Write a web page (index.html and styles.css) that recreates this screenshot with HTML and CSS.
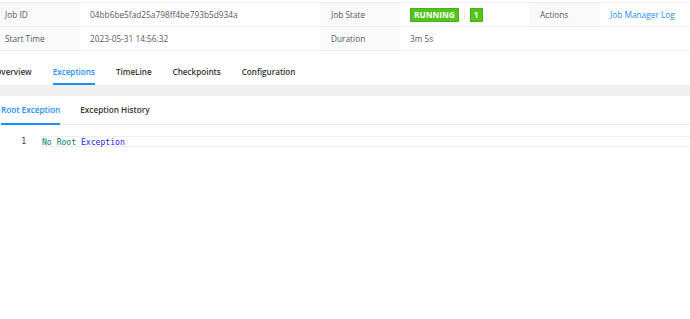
FILE: index.html
```html
<!DOCTYPE html>
<html lang="en">
<head>
    <meta charset="UTF-8">
    <meta name="viewport" content="width=device-width, initial-scale=1.0">
    <title>Job Exceptions</title>
    <link rel="stylesheet" href="styles.css">
</head>
<body>
    <div class="page">
        <table class="summary">
            <colgroup>
                <col class="c-label-1">
                <col class="c-value-1">
                <col class="c-label-2">
                <col class="c-value-2">
                <col class="c-label-3">
                <col class="c-value-3">
            </colgroup>
            <tr>
                <td class="label first">Job ID</td>
                <td>04bb6be5fad25a798ff4be793b5d934a</td>
                <td class="label">Job State</td>
                <td>
                    <span class="badge">RUNNING</span><span class="sep"></span><span class="badge">1</span>
                </td>
                <td class="label">Actions</td>
                <td><a class="link" href="#">Job Manager Log</a></td>
            </tr>
            <tr>
                <td class="label first">Start Time</td>
                <td>2023-05-31 14:56:32</td>
                <td class="label">Duration</td>
                <td colspan="3">3m 5s</td>
            </tr>
        </table>

        <nav class="tabs">
            <span class="tab">Overview</span>
            <span class="tab active">Exceptions</span>
            <span class="tab">TimeLine</span>
            <span class="tab">Checkpoints</span>
            <span class="tab">Configuration</span>
        </nav>

        <div class="band"></div>

        <div class="card">
            <div class="subtabs">
                <span class="subtab active">Root Exception</span>
                <span class="subtab">Exception History</span>
            </div>
            <div class="editor">
                <div class="code-line">
                    <span class="line-no">1</span>
                    <span class="line-text"><span class="kw">No</span> <span class="kw">Root</span> <span class="type">Exception</span></span>
                </div>
            </div>
        </div>
    </div>
</body>
</html>
```

FILE: styles.css
```css
body {
    margin: 0;
    background: #fff;
    font-family: "Open Sans", "Noto Sans", sans-serif;
    font-size: 8.3px;
    color: #595959;
    overflow: hidden;
}
.page {
    margin-left: -5px;
    width: 760px;
}
.summary {
    margin-top: 2px;
    width: 100%;
    border-collapse: collapse;
    table-layout: fixed;
    border-top: 1px solid #ececec;
    border-bottom: 1px solid #ececec;
}
.c-label-1 { width: 85px; }
.c-value-1 { width: 240px; }
.c-label-2 { width: 80px; }
.c-value-2 { width: 129px; }
.c-label-3 { width: 71px; }
.summary td {
    height: 23px;
    padding: 0 10px;
    border-bottom: 1px solid #ececec;
    white-space: nowrap;
    vertical-align: middle;
}
.summary td.label {
    background: #fafafa;
    padding-left: 11px;
}
.summary td.first {
    padding-left: 10px;
}
.badge {
    display: inline-block;
    background: #52c41a;
    border: 1px solid #49b017;
    color: #fff;
    font-weight: 700;
    font-size: 8.3px;
    line-height: 12px;
    padding: 0 3px;
    vertical-align: middle;
}
.sep {
    display: inline-block;
    width: 1px;
    height: 8px;
    background: #e8e8e8;
    margin: 0 5px;
    vertical-align: middle;
}
.link {
    color: #1890ff;
    text-decoration: none;
}
.tabs {
    display: flex;
    gap: 21px;
    height: 34px;
}
.tab {
    display: flex;
    align-items: flex-end;
    padding-bottom: 6px;
    font-weight: 600;
    font-size: 8.1px;
    color: #333;
    border-bottom: 2px solid transparent;
}
.tab.active {
    color: #1890ff;
    border-bottom-color: #1890ff;
}
.band {
    height: 11px;
    background: #f0f0f0;
}
.card {
    background: #fff;
    padding-left: 5px;
}
.subtabs {
    display: flex;
    gap: 20px;
    height: 28px;
    padding-left: 1px;
    border-bottom: 1px solid #e8e8e8;
}
.subtab {
    display: flex;
    align-items: center;
    font-weight: 600;
    font-size: 8.2px;
    color: #333;
    border-bottom: 2px solid transparent;
    margin-bottom: -1px;
}
.subtab.active {
    color: #1890ff;
    border-bottom-color: #1890ff;
}
.editor {
    padding-top: 11px;
}
.code-line {
    display: flex;
    height: 11px;
    font-family: "DejaVu Sans Mono", "Liberation Mono", monospace;
    font-size: 8.1px;
    line-height: 11px;
}
.line-no {
    width: 26px;
    padding-right: 16px;
    text-align: right;
    color: #1e3a5c;
}
.line-text {
    flex: 1;
    background: #fffffb;
    border-top: 1px solid #eeeeee;
    border-bottom: 1px solid #eeeeee;
    line-height: 10px;
    white-space: pre;
}
.kw {
    color: #098073;
}
.type {
    color: #1a1aff;
}
```
